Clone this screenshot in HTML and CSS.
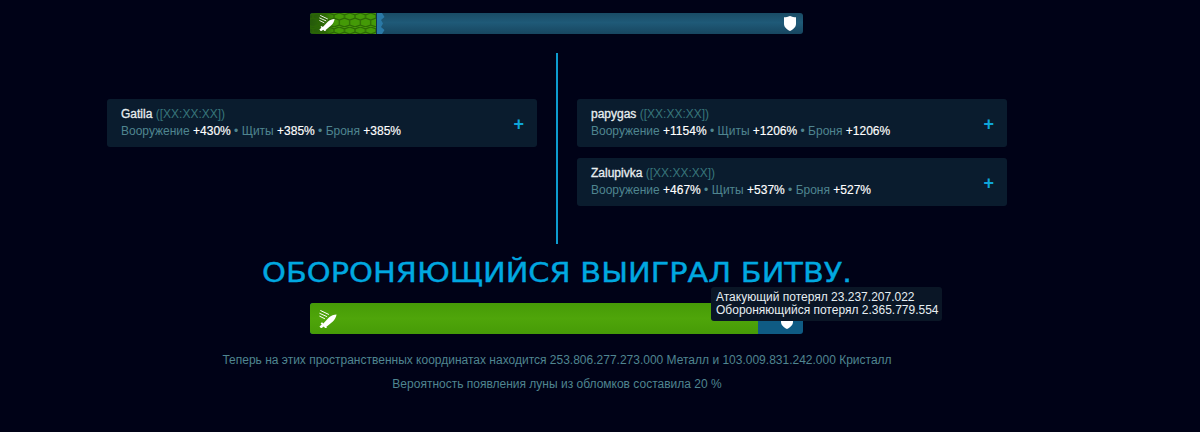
FILE: index.html
```html
<!DOCTYPE html>
<html lang="ru">
<head>
  <meta charset="UTF-8" />
  <title>Боевой доклад</title>
  <link rel="stylesheet" href="styles.css">
</head>
<body>
  <svg class="defs" width="0" height="0">
    <defs>
      <pattern id="hex" width="10.5" height="14" patternUnits="userSpaceOnUse" x="3" y="0">
        <path d="M0 2 L5.25 0 L10.5 2 V5 L5.25 7 L0 5 Z M5.25 7 V12 L0 14 M5.25 12 L10.5 14" fill="none" stroke="#2a6604" stroke-width="1.2"/>
      </pattern>
      <symbol id="sword" viewBox="0 0 20 20">
        <path d="M0.5 18.2 L3 16 L1.8 14.6 L3.4 13.6 L4.8 15 L11 8.4 C13.5 6 16.5 5.2 19.5 5 C19 8 17.6 10.8 15.4 12.8 L8 19 L9 20 L7 20.4 L5.4 18.4 L2.4 20.4 Z" fill="#fff"/>
        <path d="M1.5 0.5 L11 5 M0.5 3.6 L9 7.4 M0.5 6.8 L6.6 9.8" stroke="#fff" stroke-width="1.1" fill="none"/>
      </symbol>
      <symbol id="shield" viewBox="0 0 12 15">
        <path d="M6 0 C8 1 10 1.2 12 1.2 L12 8 C12 11 9 13.6 6 15 C3 13.6 0 11 0 8 L0 1.2 C2 1.2 4 1 6 0 Z" fill="#fff"/>
      </symbol>
    </defs>
  </svg>

  <main class="report">
    <div class="bar bar-top">
      <div class="bar-green">
        <svg class="hex-fill" width="100%" height="100%"><rect width="100%" height="100%" fill="url(#hex)"/></svg>
      </div>
      <svg class="bar-edge" viewBox="0 0 8 21" width="8" height="21">
        <path d="M0 0 H5 L7.5 4 L4 7 L6 10.5 L4 14 L7.5 17 L5 21 H0 Z" fill="#2a78a6"/>
      </svg>
      <svg class="icon-sword"><use href="#sword"/></svg>
      <svg class="icon-shield"><use href="#shield"/></svg>
    </div>

    <section class="fleets">
      <div class="side">
        <div class="fleet">
          <div>
            <div class="fleet-name"><b>Gatila</b> <span class="coords">([XX:XX:XX])</span></div>
            <div class="techs">Вооружение <b>+430%</b> • Щиты <b>+385%</b> • Броня <b>+385%</b></div>
          </div>
          <span class="plus">+</span>
        </div>
      </div>
      <div class="divider"></div>
      <div class="side">
        <div class="fleet">
          <div>
            <div class="fleet-name"><b>papygas</b> <span class="coords">([XX:XX:XX])</span></div>
            <div class="techs">Вооружение <b>+1154%</b> • Щиты <b>+1206%</b> • Броня <b>+1206%</b></div>
          </div>
          <span class="plus">+</span>
        </div>
        <div class="fleet">
          <div>
            <div class="fleet-name"><b>Zalupivka</b> <span class="coords">([XX:XX:XX])</span></div>
            <div class="techs">Вооружение <b>+467%</b> • Щиты <b>+537%</b> • Броня <b>+527%</b></div>
          </div>
          <span class="plus">+</span>
        </div>
      </div>
    </section>

    <h1 class="result">ОБОРОНЯЮЩИЙСЯ ВЫИГРАЛ БИТВУ.</h1>

    <div class="bar bar-bottom">
      <div class="bar-win"></div>
      <svg class="icon-sword"><use href="#sword"/></svg>
      <svg class="icon-shield"><use href="#shield"/></svg>
      <div class="tooltip">Атакующий потерял 23.237.207.022<br>Обороняющийся потерял 2.365.779.554</div>
    </div>

    <p class="note">Теперь на этих пространственных координатах находится 253.806.277.273.000 Металл и 103.009.831.242.000 Кристалл</p>
    <p class="note">Вероятность появления луны из обломков составила 20 %</p>
  </main>
</body>
</html>
```

FILE: styles.css
```css
html, body {
  margin: 0;
  height: 100%;
  overflow: hidden;
}
body {
  background: #000217;
  font-family: "Liberation Sans", Arial, sans-serif;
  font-size: 12px;
}
.defs {
  display: block;
  height: 0;
}
.report {
  width: 1200px;
  padding-top: 13px;
}

/* bars */
.bar {
  position: relative;
  width: 493px;
  margin: 0 0 0 310px;
  border-radius: 3px;
  display: flex;
  overflow: hidden;
  background: linear-gradient(#194b65, #1f5a78 45%, #174660);
}
.bar-top {
  height: 21px;
}
.bar-green {
  width: 66px;
  border-right: 1px solid #10334a;
  background: linear-gradient(90deg, #24590a 0, #2e6a08 15px, #449a07 25px, #449a07 100%);
}
.hex-fill {
  display: block;
}
.bar-edge {
  display: block;
}
.bar-bottom {
  height: 31px;
  margin-top: 14px;
  overflow: visible;
  background: #0f5b84;
}
.bar-win {
  width: 448px;
  margin-right: 1px;
  border-radius: 3px 0 0 3px;
  background: linear-gradient(#469b07, #4fa50a 50%, #469b07);
}
.icon-sword {
  position: absolute;
  left: 9px;
  top: 2px;
  width: 16px;
  height: 16px;
}
.icon-shield {
  position: absolute;
  right: 7px;
  top: 3px;
  width: 12px;
  height: 15px;
}
.bar-bottom .icon-sword {
  width: 18px;
  height: 18px;
  top: 7px;
}
.bar-bottom .icon-shield {
  right: 10px;
  top: 11px;
}
.tooltip {
  position: absolute;
  left: 401px;
  top: -16px;
  padding: 4px 3px 4px 5px;
  border-radius: 3px;
  background: #0a1626;
  color: #e6eef2;
  font-size: 12px;
  line-height: 13px;
  white-space: nowrap;
}

/* fleets */
.fleets {
  display: flex;
  height: 191px;
  margin-top: 19px;
  padding-left: 107px;
}
.side {
  display: flex;
  flex-direction: column;
  gap: 11px;
  width: 430px;
  padding-top: 46px;
}
.divider {
  width: 2px;
  margin: 0 19px;
  background: #0d9ccf;
}
.fleet {
  display: flex;
  align-items: center;
  justify-content: space-between;
  height: 48px;
  padding: 0 13px 0 14px;
  box-sizing: border-box;
  border-radius: 3px;
  background: #0a1c2e;
  color: #4f8590;
  line-height: 17px;
}
.fleet b {
  color: #fff;
  font-weight: normal;
  -webkit-text-stroke: 0.15px #fff;
}
.fleet-name b {
  color: #e8eef0;
  -webkit-text-stroke: 0.3px #e8eef0;
}
.coords {
  color: #37757a;
}
.plus {
  padding-top: 2px;
  color: #0ea5d8;
  font-size: 18px;
  font-weight: bold;
}

/* result */
.result {
  width: 1114px;
  margin: 0;
  padding-top: 14px;
  height: 45px;
  box-sizing: border-box;
  text-align: center;
  color: #00a8e0;
  font-family: "DejaVu Sans", sans-serif;
  font-size: 27px;
  font-weight: normal;
  line-height: 30px;
  white-space: nowrap;
  -webkit-text-stroke: 0.4px #00a8e0;
  transform: scaleX(1.125);
}
.note {
  width: 1114px;
  margin: 0;
  text-align: center;
  color: #4f8590;
  line-height: 14px;
  padding-top: 10px;
}
.bar-bottom + .note {
  padding-top: 19px;
}
```
